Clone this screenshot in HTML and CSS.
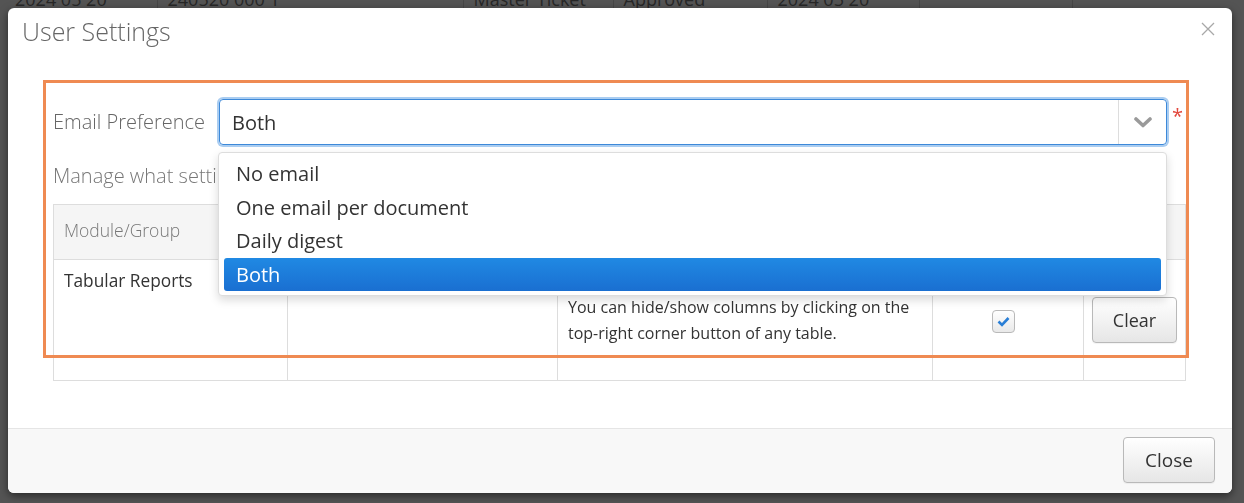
FILE: index.html
```html
<!DOCTYPE html>
<html lang="en">
<head>
    <meta charset="UTF-8">
    <meta name="viewport" content="width=device-width, initial-scale=1.0">
    <title>User Settings</title>
    <link rel="stylesheet" href="styles.css">
</head>
<body>
    <div class="page">
        <table class="bg-table">
            <colgroup>
                <col style="width:157px">
                <col style="width:306px">
                <col style="width:150px">
                <col style="width:154px">
                <col style="width:152px">
                <col style="width:153px">
                <col>
            </colgroup>
            <tr>
                <td class="first">2024 05 20</td>
                <td>240520 000 1</td>
                <td>Master Ticket</td>
                <td>Approved</td>
                <td>2024 05 20</td>
                <td></td>
                <td></td>
            </tr>
        </table>
    </div>

    <div class="modal">
        <div class="modal-header">
            <h4>User Settings</h4>
            <span class="close-x">
                <svg width="14" height="14" viewBox="0 0 14 14"><path d="M1 1L13 13M13 1L1 13" stroke="#a8a8a8" stroke-width="1.3" fill="none"/></svg>
            </span>
        </div>

        <div class="modal-body">
            <div class="form-row">
                <label>Email Preference</label>
                <div class="select-wrap">
                    <div class="select">
                        <span class="value">Both</span>
                        <span class="caret">
                            <svg width="18" height="11" viewBox="0 0 18 11"><path d="M2 2L9 8.5L16 2" stroke="#9a9a9a" stroke-width="3.6" fill="none" stroke-linecap="round" stroke-linejoin="round"/></svg>
                        </span>
                    </div>
                    <ul class="options">
                        <li>No email</li>
                        <li>One email per document</li>
                        <li>Daily digest</li>
                        <li class="active">Both</li>
                    </ul>
                </div>
                <span class="required">*</span>
            </div>

            <p class="hint">Manage what settings are remembered for you.</p>

            <table class="settings">
                <colgroup>
                    <col style="width:234px">
                    <col style="width:270px">
                    <col style="width:375px">
                    <col style="width:151px">
                    <col style="width:102px">
                </colgroup>
                <tr>
                    <th>Module/Group</th>
                    <th>Setting</th>
                    <th>Description</th>
                    <th>Saved</th>
                    <th></th>
                </tr>
                <tr class="data">
                    <td class="top">Tabular Reports</td>
                    <td></td>
                    <td class="desc">You can hide/show columns by clicking on the top-right corner button of any table.</td>
                    <td class="center">
                        <span class="check">
                            <svg width="13" height="11" viewBox="0 0 13 11"><path d="M1.5 5.5L5 9L11.5 2" stroke="#2a7fd6" stroke-width="2.6" fill="none"/></svg>
                        </span>
                    </td>
                    <td class="action"><button class="btn btn-clear">Clear</button></td>
                </tr>
            </table>
        </div>

        <div class="modal-footer">
            <button class="btn btn-close">Close</button>
        </div>

        <div class="annotation"></div>
    </div>
</body>
</html>
```

FILE: styles.css
```css
body {
    margin: 0;
    height: 503px;
    overflow: hidden;
    background: #545454;
    font-family: "Open Sans", "Liberation Sans", sans-serif;
}

.page {
    margin-top: -15px;
}
.bg-table {
    width: 100%;
    border-collapse: collapse;
    table-layout: fixed;
}
.bg-table td {
    height: 28px;
    line-height: 28px;
    padding: 0 10px;
    font-size: 18px;
    color: #272727;
    border-left: 1px solid #474747;
    white-space: nowrap;
    overflow: hidden;
}
.bg-table td.first {
    padding-left: 15px;
    border-left: none;
}

.modal {
    position: fixed;
    top: 8px;
    left: 8px;
    width: 1224px;
    height: 485px;
    background: white;
    border-radius: 6px;
    box-shadow: 0 3px 9px rgba(0, 0, 0, 0.5);
    display: flex;
    flex-direction: column;
}

.modal-header {
    display: flex;
    justify-content: space-between;
    align-items: center;
    padding: 8px 17px 14px 14px;
}
.modal-header h4 {
    margin: 0;
    font-size: 25px;
    line-height: 30px;
    font-weight: 300;
    color: #666;
}
.close-x {
    display: flex;
    margin-top: -4px;
}

.modal-body {
    flex: 1;
    padding: 39px 47px 0 45px;
}

.form-row {
    display: flex;
    align-items: flex-start;
}
.form-row label {
    width: 166px;
    line-height: 46px;
    font-size: 20px;
    font-weight: 300;
    color: #666;
}
.select-wrap {
    flex: 1;
    position: relative;
}
.select {
    height: 46px;
    box-sizing: border-box;
    border: 1px solid #3d89d9;
    border-radius: 4px;
    box-shadow: 0 0 0 2px #aacdf1;
    display: flex;
    align-items: center;
}
.select .value {
    flex: 1;
    padding-left: 12px;
    font-size: 20px;
    color: #333;
}
.select .caret {
    width: 47px;
    height: 100%;
    border-left: 1px solid #ddd;
    display: flex;
    align-items: center;
    justify-content: center;
}
.required {
    width: 13px;
    padding-left: 5px;
    margin-top: 7px;
    font-size: 20px;
    line-height: 20px;
    color: #e2483d;
}

.options {
    position: absolute;
    top: 53px;
    left: -1px;
    right: 0;
    margin: 0;
    padding: 4px 5px;
    list-style: none;
    background: white;
    border: 1px solid #ddd;
    border-radius: 4px;
    box-shadow: 0 4px 10px rgba(0, 0, 0, 0.15);
    z-index: 5;
}
.options li {
    line-height: 33.5px;
    padding: 0 12px;
    font-size: 20px;
    color: #333;
}
.options li.active {
    background: linear-gradient(#2089e3, #1a6fd1);
    color: white;
    border-radius: 3px;
}

.hint {
    margin: 17px 0 15px;
    font-size: 20px;
    line-height: 27px;
    font-weight: 300;
    color: #777;
}

.settings {
    width: 100%;
    border-collapse: collapse;
    table-layout: fixed;
}
.settings th,
.settings td {
    border: 1px solid #ddd;
    padding: 0 10px;
    text-align: left;
}
.settings th {
    height: 50px;
    padding-bottom: 4px;
    background: #f5f5f5;
    font-size: 17.5px;
    font-weight: 300;
    color: #777;
}
.settings td {
    height: 102px;
    padding: 9px 10px;
    font-size: 17.3px;
    line-height: 26px;
    color: #333;
    vertical-align: middle;
}
.settings td.top {
    vertical-align: top;
    padding-top: 8px;
}
.settings td.desc {
    font-size: 16px;
}
.settings td.center {
    text-align: center;
    padding-right: 20px;
}
.settings td.action {
    padding-left: 8px;
}

.check {
    display: inline-flex;
    align-items: center;
    justify-content: center;
    width: 23px;
    height: 23px;
    box-sizing: border-box;
    border: 1px solid #b9b9b9;
    border-radius: 4px;
    background: linear-gradient(#fff, #e9e9e9);
    vertical-align: middle;
}

.btn {
    height: 46px;
    padding: 0 17px;
    border: 1px solid #b9b9b9;
    border-radius: 4px;
    background: linear-gradient(#fff, #e6e6e6);
    box-shadow: inset 0 1px 0 #fff, 0 1px 1px rgba(0, 0, 0, 0.05);
    font-family: "Open Sans", "Liberation Sans", sans-serif;
    font-size: 18px;
    color: #333;
    cursor: pointer;
}
.btn-clear {
    width: 85px;
    padding: 0;
}

.modal-footer {
    display: flex;
    justify-content: flex-end;
    padding: 8px 17px 10px;
    border-top: 1px solid #e5e5e5;
    background: #f8f8f8;
    border-radius: 0 0 6px 6px;
}
.btn-close {
    width: 92px;
    font-size: 19px;
}

.annotation {
    position: absolute;
    left: 35px;
    top: 72px;
    width: 1146px;
    height: 278px;
    box-sizing: border-box;
    border: 3px solid #ef8a52;
    pointer-events: none;
    z-index: 10;
}
```
